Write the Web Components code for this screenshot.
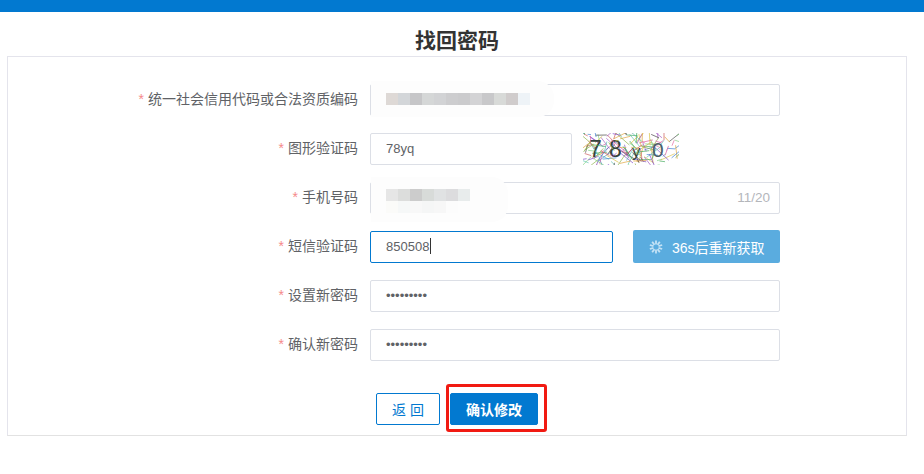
<!DOCTYPE html>
<html lang="zh">
<head>
<meta charset="utf-8">
<title>找回密码</title>
<style>
  html, body { margin: 0; background: #fff; }
  body { font-family: "Liberation Sans", "Noto Sans CJK SC", sans-serif; color: #606266; }
</style>
</head>
<body>
<top-bar></top-bar>
<page-title>找回密码</page-title>
<form-card>
  <form-row label="统一社会信用代码或合法资质编码">
    <text-box><mosaic-blur colors="#ded9d6,#d3d6d9,#c6c6c8,#d5d7d7,#d2d3d5,#cdcdcf,#cbcbcd,#d3d3d5,#c8c8ca,#d8dad8,#d0cccc,#eef3f7" width="183" top="-4" height="36"></mosaic-blur></text-box>
  </form-row>
  <form-row label="图形验证码">
    <div style="display:flex;gap:11px;align-items:center">
      <text-box style="width:202px">78yq</text-box>
      <captcha-image></captcha-image>
    </div>
  </form-row>
  <form-row label="手机号码">
    <text-box count="11/20"><mosaic-blur colors="#e6e6e6,#dcdddc,#cccccc,#d8dbd9,#e0e2e3,#dcdcde,#e8ecec" lower="#fbfbf9,#f6f8f8,#f8f8f8,#f5f6f6,#f7f7f7,#fcfcfc" width="137" top="-6" height="45"></mosaic-blur></text-box>
  </form-row>
  <form-row label="短信验证码">
    <div style="display:flex;gap:20px;align-items:flex-start">
      <text-box style="width:243px" focused>850508</text-box>
      <sms-button>36s后重新获取</sms-button>
    </div>
  </form-row>
  <form-row label="设置新密码">
    <text-box>•••••••••</text-box>
  </form-row>
  <form-row label="确认新密码">
    <text-box>•••••••••</text-box>
  </form-row>
  <form-actions></form-actions>
</form-card>

<script>
class TopBar extends HTMLElement {
  constructor() {
    super()
    this.attachShadow({ mode: 'open' }).innerHTML = `
      <style>:host { display: block; height: 12px; background: #0279d0; }</style>`
  }
}

class PageTitle extends HTMLElement {
  constructor() {
    super()
    this.attachShadow({ mode: 'open' }).innerHTML = `
      <style>
        :host {
          display: block; width: 914px; height: 44px; box-sizing: border-box; padding-top: 17px;
          text-align: center; font-size: 21px; line-height: 24px; font-weight: 700; color: #333;
          font-family: "Liberation Sans", "Noto Sans CJK SC", sans-serif;
        }
      </style>
      <slot></slot>`
  }
}

class FormCard extends HTMLElement {
  constructor() {
    super()
    this.attachShadow({ mode: 'open' }).innerHTML = `
      <style>
        :host {
          display: flex; flex-direction: column; gap: 17px;
          box-sizing: border-box; width: 900px; height: 380px; margin-left: 7px;
          padding: 27px 0 0; border: 1px solid #e4e4ec; border-bottom-color: #e2e2e2;
        }
      </style>
      <slot></slot>`
  }
}

class FormRow extends HTMLElement {
  constructor() {
    super()
    this.attachShadow({ mode: 'open' }).innerHTML = `
      <style>
        :host { display: flex; height: 32px; align-items: flex-start; }
        .label {
          width: 350px; box-sizing: border-box; text-align: right;
          font-size: 14px; line-height: 30px; color: #606266; white-space: nowrap;
        }
        .star { color: #f58a8a; margin-right: 4px; }
        .field { margin-left: 12px; width: 410px; }
      </style>
      <div class="label"><span class="star">*</span><span id="t"></span></div>
      <div class="field"><slot></slot></div>`
    this.shadowRoot.getElementById('t').textContent = this.getAttribute('label')
  }
}

class TextBox extends HTMLElement {
  constructor() {
    super()
    const count = this.getAttribute('count')
    const caret = this.hasAttribute('focused') ? '<i class="caret"></i>' : ''
    this.attachShadow({ mode: 'open' }).innerHTML = `
      <style>
        :host {
          display: block; position: relative; box-sizing: border-box; height: 32px;
          border: 1px solid #dcdfe6; border-radius: 2px; background: #fff;
          padding: 0 15px; font-size: 13px; line-height: 29px; color: #606266;
        }
        :host([focused]) { border-color: #0279d0; }
        .caret { display: inline-block; width: 1px; height: 16px; margin-left: 1px; background: #333; vertical-align: -3px; }
        .count { position: absolute; right: 9px; top: 0; font-size: 13.5px; color: #b4b6bb; }
      </style>
      <slot></slot>${caret}${count ? `<span class="count">${count}</span>` : ''}`
  }
}

// redacted patch drawn over the field, pale halo with rows of grey squares
class MosaicBlur extends HTMLElement {
  constructor() {
    super()
    const row = list => `<div class="row">${list.split(',').map(c => `<b style="background:${c}"></b>`).join('')}</div>`
    const lower = this.getAttribute('lower')
    this.attachShadow({ mode: 'open' }).innerHTML = `
      <style>
        :host {
          position: absolute; left: 0; top: ${this.getAttribute('top')}px;
          width: ${this.getAttribute('width')}px; height: ${this.getAttribute('height')}px; box-sizing: border-box;
          padding: 12px 0 0 15px; background: #fdfdfd; border-radius: 0 16px 16px 0;
        }
        .row { display: flex; }
        b { display: block; width: 12px; height: 12px; }
      </style>
      ${row(this.getAttribute('colors'))}${lower ? row(lower) : ''}`
  }
}

class CaptchaImage extends HTMLElement {
  constructor() {
    super()
    const cols = ['#e05a9a','#3aa655','#7a3fc9','#e0a030','#3a7fd0','#c94f4f','#55c0b0','#a050c0','#88b040','#444','#d8c040','#7ad07a']
    let seed = 3
    const rnd = n => { seed = (seed * 16807) % 2147483647; return seed / 2147483647 * n }
    const strokes = (count, opacity) => {
      let out = ''
      for (let i = 0; i < count; i++) {
        const x = rnd(96), y = rnd(32)
        out += `<line x1="${x.toFixed(1)}" y1="${y.toFixed(1)}" x2="${(x + rnd(30) - 15).toFixed(1)}" y2="${(y + rnd(28) - 14).toFixed(1)}" stroke="${cols[i % cols.length]}" stroke-width=".8" opacity="${opacity}"/>`
      }
      return out
    }
    this.attachShadow({ mode: 'open' }).innerHTML = `
      <style>:host { display: block; width: 96px; height: 32px; overflow: hidden; } svg { display: block; }</style>
      <svg width="96" height="32" viewBox="0 0 96 32">
        ${strokes(110, .8)}
        <g font-family="Liberation Sans, sans-serif" font-size="23" fill="#36443e">
          <text x="6" y="24">7</text><text x="26" y="24">8</text><text x="49" y="24" font-size="17">y</text><text x="69" y="24" font-size="21" fill="#4a5f6a">0</text>
        </g>
        ${strokes(50, .85)}
      </svg>`
  }
}

class SmsButton extends HTMLElement {
  constructor() {
    super()
    let rays = ''
    for (let a = 0; a < 360; a += 36) {
      rays += `<line x1="7" y1="0.5" x2="7" y2="4.4" transform="rotate(${a} 7 7)"/>`
    }
    this.attachShadow({ mode: 'open' }).innerHTML = `
      <style>
        :host {
          display: flex; align-items: center; box-sizing: border-box; width: 147px; height: 33px; margin-top: -1px;
          padding-left: 16px; border-radius: 2px; background: #5aacdf; color: #fff; font-size: 14px;
        }
        svg { margin-right: 9px; }
        line { stroke: #c4e2f5; stroke-width: 1.8; }
      </style>
      <svg width="14" height="14" viewBox="0 0 14 14">${rays}</svg><slot></slot>`
  }
}

class FormActions extends HTMLElement {
  constructor() {
    super()
    this.attachShadow({ mode: 'open' }).innerHTML = `
      <style>
        :host { display: flex; margin: 15px 0 0 368px; gap: 10px; }
        button {
          box-sizing: border-box; height: 32px; padding: 0; border-radius: 2px; font-size: 14px;
          font-family: "Liberation Sans", "Noto Sans CJK SC", sans-serif;
        }
        .back { width: 64px; background: #fff; border: 1px solid #0279d0; color: #0279d0; }
        .ok { width: 88px; background: #0279d0; border: 1px solid #0279d0; color: #fff; font-weight: 700; }
        .wrap { position: relative; }
        .mark {
          position: absolute; left: -4px; top: -9px; width: 101px; height: 48px; box-sizing: border-box;
          border: 3px solid #f11a12; border-radius: 3px; pointer-events: none;
        }
      </style>
      <button class="back">返 回</button>
      <div class="wrap"><button class="ok">确认修改</button><div class="mark"></div></div>`
  }
}

customElements.define('top-bar', TopBar)
customElements.define('page-title', PageTitle)
customElements.define('form-card', FormCard)
customElements.define('form-row', FormRow)
customElements.define('text-box', TextBox)
customElements.define('mosaic-blur', MosaicBlur)
customElements.define('captcha-image', CaptchaImage)
customElements.define('sms-button', SmsButton)
customElements.define('form-actions', FormActions)
</script>
</body>
</html>
